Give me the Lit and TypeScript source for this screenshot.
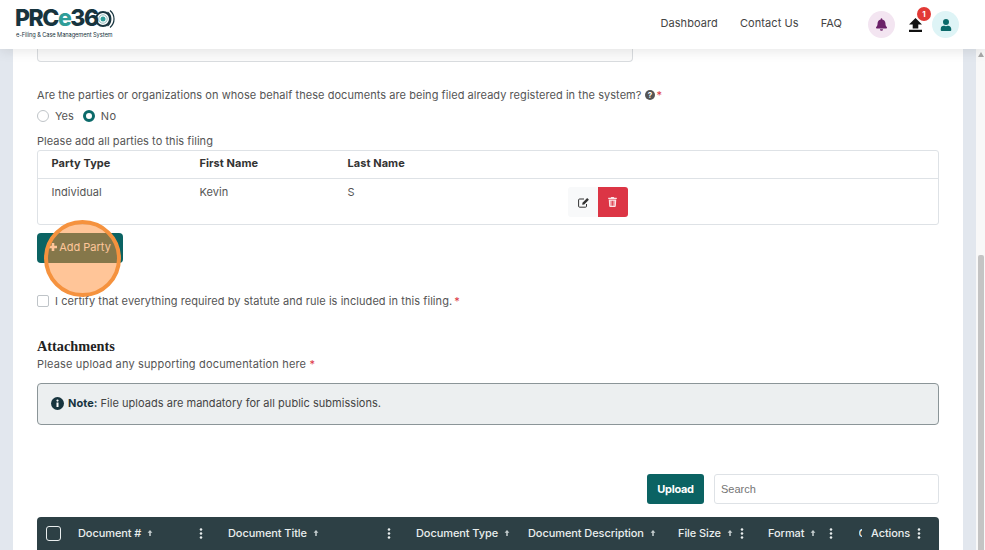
import { LitElement, html, css, unsafeCSS } from "lit";
import { customElement } from "lit/decorators.js";

const FONT = unsafeCSS(`"Inter", "Noto Sans", sans-serif`);

const sortArrow = html`<svg class="arrow" viewBox="0 0 8 10" width="6" height="8"><path d="M4 1 7.2 4.6H5V9H3V4.6H.8z" fill="currentColor"/></svg>`;
const dots = html`<svg class="dots" viewBox="0 0 4 14" width="4" height="11"><circle cx="2" cy="2" r="1.6"/><circle cx="2" cy="7" r="1.6"/><circle cx="2" cy="12" r="1.6"/></svg>`;

@customElement("app-root")
export class AppRoot extends LitElement {
  static styles = css`
    :host { display: block; width: 985px; height: 550px; overflow: hidden; position: relative; background: #fff;
      font-family: ${FONT}; color: #555; font-size: 11px; }
    * { box-sizing: border-box; }
    .top { height: 49px; background: #fff; box-shadow: 0 2px 12px rgba(0,0,0,.10); display: flex; align-items: center; padding: 0 26px 0 15px; position: relative; z-index: 2; }
    .logo { display: flex; flex-direction: column; width: 98px; padding-bottom: 3px; }
    .logo-main { display: flex; align-items: center; height: 21px; font: 800 23px/21px "Inter", sans-serif; color: #17343e; letter-spacing: -1.45px; white-space: nowrap; }
    .logo-main .e { color: #2f9d98; }
    .logo-ring { margin-left: -3px; flex: none; }
    .logo-sub { font-size: 5.7px; line-height: 7px; color: #17343e; white-space: nowrap; letter-spacing: -.08px; margin: 2px 0 0 1px; }
    .spacer { flex: 1; }
    .nav { display: flex; gap: 22px; align-items: center; font-size: 11px; color: #444; letter-spacing: .08px; margin-right: 26px; padding-bottom: 4px; }
    .circle { width: 27px; height: 27px; border-radius: 50%; display: flex; align-items: center; justify-content: center; }
    .bell { background: #f3e5f1; }
    .user { background: #def4f6; }
    .up { width: 26px; height: 27px; margin: 0 3px 0 8px; padding-right: 1px; display: flex; align-items: center; justify-content: center; position: relative; }
    .badge { position: absolute; top: -4px; right: -2px; width: 14px; height: 14px; border-radius: 50%; background: #e23a36; color: #fff; font-size: 8px; font-weight: 700; display: flex; align-items: center; justify-content: center; }
    .body { display: flex; height: 501px; }
    .left-gutter { width: 13px; background: #e2e7ee; }
    .main { width: 950px; padding: 0 24px; min-width: 0; }
    .right-gutter { width: 13px; background: #e2e7ee; }
    .bar { width: 9px; background: #f8f8f8; display: flex; flex-direction: column; }
    .bar .tri { width: 0; height: 0; border-left: 3.5px solid transparent; border-right: 3.5px solid transparent; border-bottom: 5px solid #a8a8a8; margin: 3px 0 0 1.5px; }
    .bar .thumb { width: 6px; margin: 198px 0 0 2px; flex: 1; background: #c4c4c4; border-radius: 2px 2px 0 0; }
    .stub { height: 13px; border: 1px solid #d9dcdf; border-top: 0; border-radius: 0 0 4px 4px; background: #fbfbfb; width: 596px; }
    .q { margin-top: 26px; height: 14px; line-height: 14px; display: flex; align-items: center; white-space: nowrap; letter-spacing: .055px; }
    .req { color: #dc3545; margin-left: 2px; }
    .help { margin-left: 3px; }
    .radios { display: flex; align-items: center; margin-top: 7px; height: 14px; }
    .radio { width: 12px; height: 12px; border-radius: 50%; border: 1px solid #bfc4c8; margin-right: 6px; }
    .radio.on { border: 3.5px solid #0b6a6a; background: #fff; }
    .radios span { margin-right: 9px; }
    .radios span:last-child { letter-spacing: .4px; }
    .please { margin-top: 11px; height: 14px; line-height: 14px; letter-spacing: .05px; }
    .tbl { border: 1px solid #dee2e6; border-radius: 3px; height: 75px; margin-top: 2px; width: 902px; }
    .tr { display: grid; grid-template-columns: 148px 148px 220px 1fr; padding-left: 13.5px; }
    .tr.h { height: 28px; border-bottom: 1px solid #dee2e6; align-items: center; font-weight: 700; color: #333; padding-bottom: 4px; letter-spacing: .06px; }
    .tr.b { height: 45px; padding-top: 6px; letter-spacing: .05px; }
    .acts { display: flex; margin-top: 2px; }
    .btn-s { width: 30px; height: 30px; display: flex; align-items: center; justify-content: center; }
    .edit { background: #f8f9fa; border-radius: 3px 0 0 3px; padding-left: 2px; }
    .del { background: #dc3545; border-radius: 0 3px 3px 0; }
    .add { margin-top: 8px; width: 86px; height: 30px; background: #0b6363; color: #fff; border-radius: 4px; display: flex; align-items: center; justify-content: center; gap: 2px; padding-bottom: 2px; }
    .cert { margin-top: 31px; display: flex; align-items: center; height: 14px; white-space: nowrap; letter-spacing: .065px; }
    .cb { width: 12px; height: 12px; border: 1px solid #bfc4c8; border-radius: 2px; margin-right: 6px; }
    h3 { margin: 29px 0 0; font: 700 14.3px/18px "Liberation Serif", serif; color: #222; height: 18px; }
    .sup { margin-top: 2px; height: 14px; line-height: 14px; letter-spacing: .16px; }
    .sup .req { margin-left: 0; }
    .note { margin-top: 12px; width: 902px; height: 42px; background: #eceff0; border: 1px solid #8b9598; border-radius: 4px; display: flex; align-items: center; padding: 0 0 2px 13px; gap: 4px; color: #444; letter-spacing: .03px; }
    .note b { color: #17343e; }
    .tools { display: flex; justify-content: flex-end; align-items: center; gap: 10px; margin-top: 49px; width: 902px; height: 30px; }
    .upload { width: 57px; height: 30px; background: #0b6363; color: #fff; border-radius: 3px; display: flex; align-items: center; justify-content: center; font-weight: 700; letter-spacing: -.3px; }
    .search { width: 225px; height: 30px; border: 1px solid #dee2e6; border-radius: 3px; padding-left: 6px; display: flex; align-items: center; color: #757575; font: 11px "Liberation Sans", sans-serif; }
    .grid-h { margin-top: 13px; width: 902px; height: 40px; background: #2d4045; border-radius: 4px 4px 0 0; color: #e9eeee; display: flex; align-items: flex-start; font-weight: 500; letter-spacing: -.08px; }
    .col { display: flex; align-items: center; justify-content: space-between; white-space: nowrap; height: 32px; padding-right: 25px; flex: none; }
    .col > span { display: flex; align-items: center; }
    .w-check { width: 41px; padding: 0 0 0 9px; }
    .w-num { width: 150px; }
    .w-title { width: 188px; }
    .w-type { width: 112px; padding: 0; }
    .w-desc { width: 150px; padding: 0; }
    .w-size { width: 90px; padding-right: 24px; }
    .w-format { width: 90.5px; padding-right: 26px; }
    .w-clip { width: 12.5px; padding: 0; overflow: hidden; }
    .clip { width: 3px; overflow: hidden; display: block; }
    .w-actions { width: 68px; padding-right: 18px; }
    .arrow { margin-left: 6px; color: #c7d0d1; }
    .dots { fill: #e9eeee; flex: none; }
    .hcb { width: 15px; height: 15px; border: 1px solid #e9eeee; border-radius: 3px; }
    .spot { position: absolute; left: 44px; top: 220px; width: 77px; height: 77px; border-radius: 50%; border: 4px solid #f5923e; background: rgba(255,140,50,.5); z-index: 3; }
  `;

  render() {
    return html`
      <div class="top">
        <div class="logo">
          <div class="logo-main">PRC<span class="e">e</span>36
            <svg class="logo-ring" width="20" height="20" viewBox="0 0 20 20" fill="none">
              <circle cx="8" cy="10" r="7" stroke="#17343e" stroke-width="2"/>
              <path d="M12.5 3a9 9 0 0 1 0 14M15 1.5a11 11 0 0 1 0 17" stroke="#17343e" stroke-width="1.2"/>
              <circle cx="8" cy="10" r="4.2" stroke="#8fb8ba" stroke-width="1"/>
              <circle cx="8" cy="10" r="2.5" fill="#2f9d98"/>
            </svg>
          </div>
          <div class="logo-sub">e-Filing &amp; Case Management System</div>
        </div>
        <div class="spacer"></div>
        <div class="nav"><span>Dashboard</span><span>Contact Us</span><span>FAQ</span></div>
        <div class="circle bell">
          <svg width="11" height="13" viewBox="0 0 448 512"><path fill="#6b2168" d="M224 512a64 64 0 0 0 64-64H160a64 64 0 0 0 64 64zm215-150c-19-21-55-52-55-154 0-78-54-140-128-155V32a32 32 0 1 0-64 0v21C118 68 64 130 64 208c0 102-36 133-55 154-6 6-9 14-9 22 0 16 13 32 32 32h384c19 0 32-16 32-32 0-8-3-16-9-22z"/></svg>
        </div>
        <div class="up">
          <svg width="13" height="14" viewBox="0 0 13 14"><path fill="#111" d="M6.5 0 13 6.4H9.3V10.6H3.7V6.4H0zM0 11.8H13V14H0z"/></svg>
          <div class="badge">1</div>
        </div>
        <div class="circle user">
          <svg width="12" height="12" viewBox="0 0 448 512"><path fill="#0b6a6a" d="M224 256a128 128 0 1 0 0-256 128 128 0 0 0 0 256zm90 32h-17a174 174 0 0 1-146 0h-17A134 134 0 0 0 0 422v42c0 27 21 48 48 48h352c27 0 48-21 48-48v-42c0-74-60-134-134-134z"/></svg>
        </div>
      </div>
      <div class="body">
        <div class="left-gutter"></div>
        <div class="main">
          <div class="stub"></div>
          <div class="q">Are the parties or organizations on whose behalf these documents are being filed already registered in the system?
            <svg class="help" width="10" height="10" viewBox="0 0 10 10"><circle cx="5" cy="5" r="5" fill="#555"/><text x="5" y="7.8" text-anchor="middle" font-size="8" font-weight="700" fill="#fff">?</text></svg>
            <span class="req">*</span></div>
          <div class="radios"><div class="radio"></div><span>Yes</span><div class="radio on"></div><span>No</span></div>
          <div class="please">Please add all parties to this filing</div>
          <div class="tbl">
            <div class="tr h"><div>Party Type</div><div>First Name</div><div>Last Name</div></div>
            <div class="tr b"><div>Individual</div><div>Kevin</div><div>S</div>
              <div class="acts">
                <div class="btn-s edit"><svg width="12" height="11" viewBox="0 0 12 11"><path fill="none" stroke="#333" stroke-width="1" d="M8.5 7v2.2a1 1 0 0 1-1 1H1.6a1 1 0 0 1-1-1V3a1 1 0 0 1 1-1H6"/><path fill="#333" d="M4.5 5.8 9.2 1l1.7 1.7L6.2 7.5l-2 .3z"/></svg></div>
                <div class="btn-s del"><svg width="9" height="10" viewBox="0 0 448 512"><path fill="#fbe4e6" fill-rule="evenodd" d="M432 32H312l-9-19a24 24 0 0 0-22-13H167a24 24 0 0 0-22 13l-9 19H16A16 16 0 0 0 0 48v32a16 16 0 0 0 16 16h416a16 16 0 0 0 16-16V48a16 16 0 0 0-16-16zM53 467a48 48 0 0 0 48 45h246a48 48 0 0 0 48-45l21-339H32zM130 190h44v260h-44zM202 190h44v260h-44zM274 190h44v260h-44z"/></svg></div>
              </div>
            </div>
          </div>
          <div class="add"><svg width="8" height="8" viewBox="0 0 8 8"><path fill="#fff" d="M2.7 0h2.6v2.7H8v2.6H5.3V8H2.7V5.3H0V2.7h2.7z"/></svg>Add Party</div>
          <div class="cert"><div class="cb"></div>I certify that everything required by statute and rule is included in this filing.<span class="req">*</span></div>
          <h3>Attachments</h3>
          <div class="sup">Please upload any supporting documentation here <span class="req">*</span></div>
          <div class="note">
            <svg width="13" height="13" viewBox="0 0 13 13"><circle cx="6.5" cy="6.5" r="6.5" fill="#17343e"/><rect x="5.5" y="5.5" width="2" height="4.5" fill="#fff"/><circle cx="6.5" cy="3.6" r="1.1" fill="#fff"/></svg>
            <span><b>Note:</b> File uploads are mandatory for all public submissions.</span>
          </div>
          <div class="tools"><div class="upload">Upload</div><div class="search">Search</div></div>
          <div class="grid-h">
            <div class="col w-check"><div class="hcb"></div></div>
            <div class="col w-num"><span>Document #${sortArrow}</span>${dots}</div>
            <div class="col w-title"><span>Document Title${sortArrow}</span>${dots}</div>
            <div class="col w-type"><span>Document Type${sortArrow}</span></div>
            <div class="col w-desc"><span>Document Description${sortArrow}</span></div>
            <div class="col w-size"><span>File Size${sortArrow}</span>${dots}</div>
            <div class="col w-format"><span>Format${sortArrow}</span>${dots}</div>
            <div class="col w-clip"><span class="clip">C</span></div>
            <div class="col w-actions"><span>Actions</span>${dots}</div>
          </div>
        </div>
        <div class="right-gutter"></div>
        <div class="bar"><div class="tri"></div><div class="thumb"></div></div>
      </div>
      <div class="spot"></div>
    `;
  }
}
